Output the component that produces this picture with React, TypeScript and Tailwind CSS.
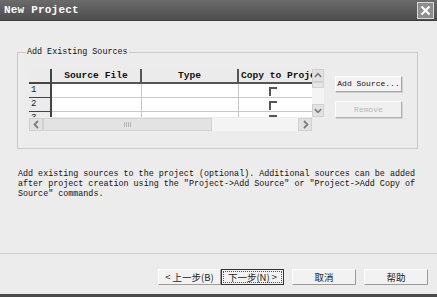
import React from "react";

const mono = { fontFamily: '"Liberation Mono", "DejaVu Sans Mono", monospace' };
const cjk = { fontFamily: '"Noto Sans CJK SC", "Liberation Sans", sans-serif' };

function Chevron({ dir }: { dir: "up" | "down" | "left" | "right" }) {
  const paths: Record<string, string> = {
    up: "M2 7 L5.5 3.5 L9 7",
    down: "M2 4 L5.5 7.5 L9 4",
    left: "M7 2 L3.5 5.5 L7 9",
    right: "M4 2 L7.5 5.5 L4 9",
  };
  return (
    <svg width="11" height="11" viewBox="0 0 11 11">
      <path d={paths[dir]} fill="none" stroke="#7d7d7d" strokeWidth="1.8" />
    </svg>
  );
}

function Check() {
  return (
    <div className="w-[8px] h-[9px] border-t-[2px] border-l-[2px] border-[#555] mt-[3px]" />
  );
}

export default function App() {
  return (
    <div className="w-[437px] h-[297px] bg-[#ececec] flex flex-col overflow-hidden">
      {/* Title bar */}
      <div className="h-[21px] flex items-center justify-between bg-gradient-to-b from-[#6b6b6b] to-[#4e4e4e] border-b border-[#3e3e3e] pl-[4px] pr-[3px]">
        <span className="text-white font-bold text-[11px] leading-none tracking-[0.2px]" style={mono}>
          New Project
        </span>
        <div className="w-[17px] h-[17px] border border-[#d8d8d8] bg-[#8e8e8e] flex items-center justify-center mt-[1px]">
          <svg width="11" height="11" viewBox="0 0 11 11">
            <path d="M1.5 1.5 L9.5 9.5 M9.5 1.5 L1.5 9.5" stroke="#fff" strokeWidth="2" />
          </svg>
        </div>
      </div>

      {/* Body */}
      <div className="flex-1 flex flex-col px-[17px] pt-[26px]">
        <fieldset className="border border-[#c9c9c9] h-[102px] w-[401px] pl-[11px] pr-0 pb-0 m-0 min-w-0">
          <legend className="px-[1px] ml-[-3px] text-[8.4px] text-[#111] leading-[10px]" style={mono}>
            Add Existing Sources
          </legend>
          <div className="flex mt-[12px]">
            {/* table + scrollbars */}
            <div className="flex flex-col">
              <div className="flex">
                <div className="w-[283px] h-[48px] bg-white overflow-hidden flex flex-col">
                  {/* header */}
                  <div className="flex h-[15px] shrink-0 text-[9.6px] font-bold text-[#111]" style={mono}>
                    <div className="w-[23px] bg-[#ebebeb] border-r-2 border-b-2 border-[#444]" />
                    <div className="w-[90px] bg-[#ebebeb] border-r-2 border-b-2 border-[#555] flex items-center justify-center leading-none">
                      Source File
                    </div>
                    <div className="w-[97px] bg-[#ebebeb] border-r-2 border-b-2 border-[#555] flex items-center justify-center leading-none">
                      Type
                    </div>
                    <div className="w-[73px] bg-[#ebebeb] border-b-2 border-[#555] flex items-center pl-[2px] leading-none whitespace-nowrap overflow-hidden">
                      Copy to Project
                    </div>
                  </div>
                  {["1", "2", "3"].map((n) => (
                    <div key={n} className="flex h-[14px] shrink-0">
                      <div
                        className="w-[23px] bg-[#ebebeb] border-r-2 border-b border-[#444] text-[9px] leading-[12px] pl-[2px] text-[#222]"
                        style={mono}
                      >
                        {n}
                      </div>
                      <div className="w-[90px] border-r border-b border-[#c8c8c8]" />
                      <div className="w-[97px] border-r border-b border-[#c8c8c8]" />
                      <div className="w-[73px] border-b border-[#c8c8c8] flex justify-center pr-[6px]">
                        <Check />
                      </div>
                    </div>
                  ))}
                </div>
                {/* vertical scrollbar */}
                <div className="w-[12px] h-[48px] flex flex-col bg-[#f4f4f4]">
                  <div className="h-[13px] bg-[#e2e2e2] border border-[#d0d0d0] flex items-center justify-center">
                    <Chevron dir="up" />
                  </div>
                  <div className="h-[6px] bg-[#e6e6e6] border border-[#d3d3d3]" />
                  <div className="flex-1" />
                  <div className="h-[13px] bg-[#e2e2e2] border border-[#d0d0d0] flex items-center justify-center">
                    <Chevron dir="down" />
                  </div>
                </div>
              </div>
              {/* horizontal scrollbar */}
              <div className="w-[283px] h-[13px] mt-[1px] flex bg-[#f4f4f4]">
                <div className="w-[14px] bg-[#e2e2e2] border border-[#d0d0d0] flex items-center justify-center">
                  <Chevron dir="left" />
                </div>
                <div className="w-[169px] bg-[#e3e3e3] border border-[#d2d2d2] flex items-center justify-center gap-[1px]">
                  <div className="w-px h-[5px] bg-[#b5b5b5]" />
                  <div className="w-px h-[5px] bg-[#b5b5b5]" />
                  <div className="w-px h-[5px] bg-[#b5b5b5]" />
                  <div className="w-px h-[5px] bg-[#b5b5b5]" />
                </div>
                <div className="flex-1" />
                <div className="w-[14px] bg-[#e2e2e2] border border-[#d0d0d0] flex items-center justify-center">
                  <Chevron dir="right" />
                </div>
              </div>
            </div>
            {/* side buttons */}
            <div className="flex flex-col ml-[11px] mt-[7px] gap-[9px]">
              <div
                className="w-[67px] h-[16px] bg-[#f3f3f3] border border-[#fff] border-r-[#a8a8a8] border-b-[#a8a8a8] shadow-[1px_1px_0_#d0d0d0] text-[8px] leading-none flex items-center justify-center text-[#111] whitespace-nowrap"
                style={mono}
              >
                Add Source...
              </div>
              <div
                className="w-[67px] h-[17px] bg-[#f0f0f0] border border-[#fff] border-r-[#b0b0b0] border-b-[#b0b0b0] shadow-[1px_1px_0_#d4d4d4] text-[8px] leading-none flex items-center justify-center text-[#b8b8b8]"
                style={mono}
              >
                Remove
              </div>
            </div>
          </div>
        </fieldset>

        <p className="mt-[20px] ml-[1px] text-[8.4px] leading-[10px] text-[#111] whitespace-pre" style={mono}>
          {'Add existing sources to the project (optional). Additional sources can be added\nafter project creation using the "Project->Add Source" or "Project->Add Copy of\nSource" commands.'}
        </p>
      </div>

      {/* Bottom buttons */}
      <div className="border-t border-[#cfcfcf] h-[41px] flex items-start pt-[15px] pl-[158px]">
        <div className="w-[63px] h-[16px] bg-[#f2f2f2] border border-[#fff] border-r-[#9a9a9a] border-b-[#9a9a9a] flex items-center justify-center text-[9.5px] text-[#222] whitespace-nowrap" style={cjk}>
          {"< 上一步(B)"}
        </div>
        <div className="w-[63px] h-[16px] bg-[#f2f2f2] border border-[#333] flex items-center justify-center p-[1px]">
          <div className="w-full h-full border border-dotted border-[#555] flex items-center justify-center text-[9.5px] text-[#222] whitespace-nowrap" style={cjk}>
            {"下一步(N) >"}
          </div>
        </div>
        <div className="w-[64px] h-[16px] ml-[8px] bg-[#f2f2f2] border border-[#fff] border-r-[#9a9a9a] border-b-[#9a9a9a] flex items-center justify-center text-[9.5px] text-[#222]" style={cjk}>
          取消
        </div>
        <div className="w-[64px] h-[16px] ml-[8px] bg-[#f2f2f2] border border-[#fff] border-r-[#9a9a9a] border-b-[#9a9a9a] flex items-center justify-center text-[9.5px] text-[#222]" style={cjk}>
          帮助
        </div>
      </div>
      <div className="h-[3px] bg-[#4a4a4a]" />
    </div>
  );
}
